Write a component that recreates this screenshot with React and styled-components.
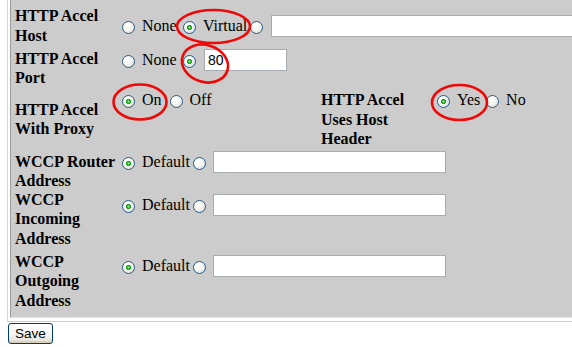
import React from 'react';
import styled, { createGlobalStyle } from 'styled-components';

const GlobalStyle = createGlobalStyle`
  html, body {
    margin: 0;
    padding: 0;
    background: #ffffff;
    overflow: hidden;
  }
`;

const Page = styled.div`
  position: relative;
  width: 572px;
  height: 347px;
  overflow: hidden;
  font-family: "Liberation Serif", "Times New Roman", serif;
  color: #000;
`;

const Frame = styled.div`
  margin-left: 7px;
  width: 680px;
  border-left: 1px solid #e0e08a;
  border-bottom: 1px solid #d8d684;
  padding: 0 0 3px 2px;
`;

const Panel = styled.div`
  background: #cccccc;
  border-left: 1px solid #9c9c9c;
  border-bottom: 1px solid #e4e4e4;
  padding: 6px 0 7px 4px;
`;

const Row = styled.div`
  display: grid;
  grid-template-columns: 102px 204px 111px 1fr;
  margin-top: ${p => p.$mt || 0}px;
`;

const Label = styled.div`
  font-weight: bold;
  font-size: 16px;
  line-height: 19.5px;
  padding-top: ${p => p.$pt || 0}px;
  align-self: ${p => (p.$center ? 'center' : 'start')};
`;

const Value = styled.div`
  display: flex;
  align-items: center;
  min-height: 19.5px;
  padding-left: 5px;
  padding-top: ${p => p.$pt || 0}px;
  grid-column: ${p => (p.$span ? '2 / -1' : 'auto')};
  align-self: ${p => (p.$center ? 'center' : 'start')};
  font-size: 16px;
  line-height: 19.5px;
  white-space: nowrap;
`;

const dot = 'radial-gradient(circle at 50% 50%, #8ee88e 0 0.8px, #23a323 1.4px 2.4px, transparent 2.9px)';
const face = 'radial-gradient(circle at 35% 30%, #ffffff 0%, #f6f6f3 45%, #d3d3cb 100%)';

const Radio = styled.input.attrs({ type: 'radio' })`
  appearance: none;
  -webkit-appearance: none;
  flex: none;
  width: 13px;
  height: 13px;
  margin: 3px 0 0 0;
  border: 1px solid #2a5a8a;
  border-radius: 50%;
  background: ${face};
  &:checked {
    background: ${dot}, ${face};
  }
`;

const Opt = styled.span`
  margin: 0 ${p => p.$mr || 0}px 0 7px;
`;

const Field = styled.input`
  flex: none;
  box-sizing: border-box;
  width: ${p => p.$w}px;
  height: 22px;
  margin: 0 0 0 ${p => p.$ml}px;
  padding: 0 3px;
  border: 1px solid #a5acb2;
  background: #fff;
  font: 14px "Liberation Sans", Arial, sans-serif;
  color: #000;
  outline: none;
`;

const SaveButton = styled.button`
  display: block;
  margin: 1px 0 0 8px;
  width: 45px;
  height: 21px;
  padding: 0 0 1px;
  border: 1px solid #003c74;
  border-radius: 3px;
  background: linear-gradient(#ffffff 0%, #f5f4ee 60%, #e0ddd2 100%);
  box-shadow: inset 0 -2px 0 #d6d2c2;
  font: 13.5px "Liberation Sans", Arial, sans-serif;
  color: #000;
`;

const Marks = styled.svg`
  position: absolute;
  left: 0;
  top: 0;
  pointer-events: none;
`;

const WccpRow = ({ mt, pt, lpt, name, label }) => (
  <Row $mt={mt}>
    <Label $pt={lpt}>{label}</Label>
    <Value $pt={pt}>
      <Radio name={name} defaultChecked />
      <Opt $mr={3.1}>Default</Opt>
      <Radio name={name} />
      <Field $ml={7} $w={233} />
    </Value>
  </Row>
);

export default function App() {
  return (
    <Page>
      <GlobalStyle />
      <Frame>
        <Panel>
          <Row>
            <Label>HTTP Accel Host</Label>
            <Value $span $center>
              <Radio name="host" />
              <Opt $mr={6.3}>None</Opt>
              <Radio name="host" defaultChecked />
              <Opt $mr={3}>Virtual</Opt>
              <Radio name="host" />
              <Field $ml={8} $w={340} />
            </Value>
          </Row>
          <Row $mt={3}>
            <Label $pt={0.5}>HTTP Accel Port</Label>
            <Value $span $pt={1}>
              <Radio name="port" />
              <Opt $mr={6.3}>None</Opt>
              <Radio name="port" defaultChecked />
              <Field $ml={8} $w={83} defaultValue="80" />
            </Value>
          </Row>
          <Row $mt={2.5}>
            <Label $center>HTTP Accel With Proxy</Label>
            <Value>
              <Radio name="proxy" defaultChecked />
              <Opt $mr={8}>On</Opt>
              <Radio name="proxy" />
              <Opt>Off</Opt>
            </Value>
            <Label>HTTP Accel Uses Host Header</Label>
            <Value>
              <Radio name="hosthdr" defaultChecked />
              <Opt $mr={5.8}>Yes</Opt>
              <Radio name="hosthdr" />
              <Opt>No</Opt>
            </Value>
          </Row>
          <WccpRow mt={2.5} lpt={0.5} pt={0} name="router" label="WCCP Router Address" />
          <WccpRow mt={-1} lpt={0} pt={4} name="incoming" label="WCCP Incoming Address" />
          <WccpRow mt={3.5} lpt={0} pt={3} name="outgoing" label="WCCP Outgoing Address" />
        </Panel>
      </Frame>
      <SaveButton type="button">Save</SaveButton>
      <Marks width="572" height="347" viewBox="0 0 572 347">
        <g fill="none" stroke="#ee0808" strokeWidth="2.6">
          <ellipse cx="213.5" cy="26.5" rx="36.5" ry="16.5" />
          <ellipse cx="205" cy="63.5" rx="23.5" ry="18.5" transform="rotate(18 205 63.5)" />
          <ellipse cx="140" cy="102" rx="26.5" ry="17.5" />
          <ellipse cx="459.5" cy="102.5" rx="27.5" ry="17.5" />
        </g>
      </Marks>
    </Page>
  );
}
